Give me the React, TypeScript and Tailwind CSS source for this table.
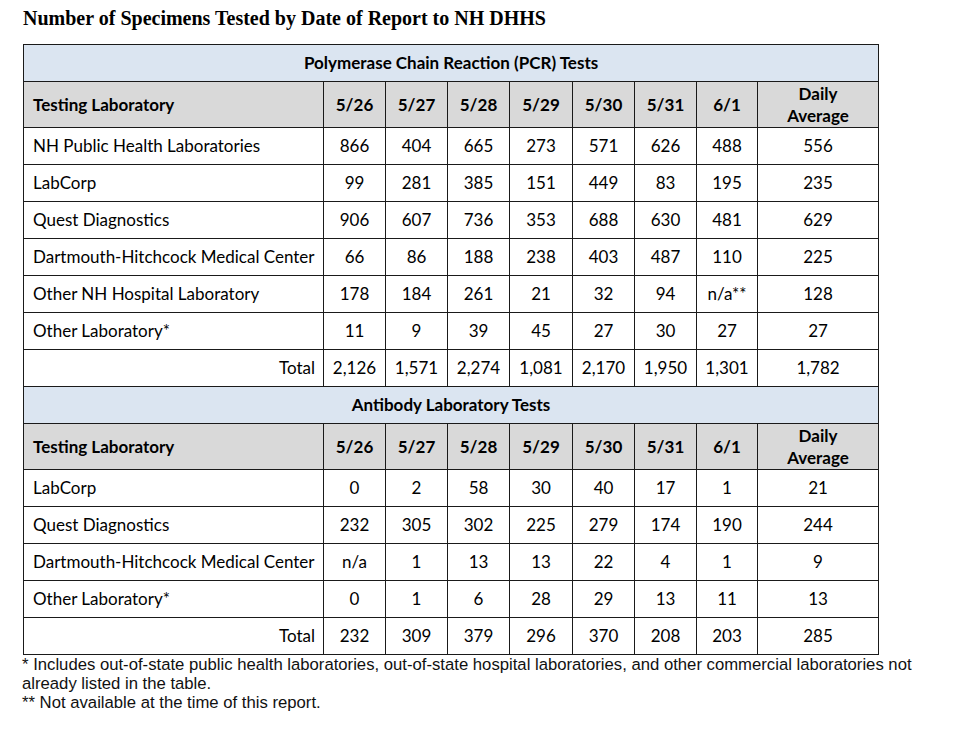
const dates = ["5/26", "5/27", "5/28", "5/29", "5/30", "5/31", "6/1"];

type Row = { lab: string; vals: string[]; avg: string };

const pcr: Row[] = [
  { lab: "NH Public Health Laboratories", vals: ["866", "404", "665", "273", "571", "626", "488"], avg: "556" },
  { lab: "LabCorp", vals: ["99", "281", "385", "151", "449", "83", "195"], avg: "235" },
  { lab: "Quest Diagnostics", vals: ["906", "607", "736", "353", "688", "630", "481"], avg: "629" },
  { lab: "Dartmouth-Hitchcock Medical Center", vals: ["66", "86", "188", "238", "403", "487", "110"], avg: "225" },
  { lab: "Other NH Hospital Laboratory", vals: ["178", "184", "261", "21", "32", "94", "n/a**"], avg: "128" },
  { lab: "Other Laboratory*", vals: ["11", "9", "39", "45", "27", "30", "27"], avg: "27" },
];
const pcrTotal = ["2,126", "1,571", "2,274", "1,081", "2,170", "1,950", "1,301"];

const antibody: Row[] = [
  { lab: "LabCorp", vals: ["0", "2", "58", "30", "40", "17", "1"], avg: "21" },
  { lab: "Quest Diagnostics", vals: ["232", "305", "302", "225", "279", "174", "190"], avg: "244" },
  { lab: "Dartmouth-Hitchcock Medical Center", vals: ["n/a", "1", "13", "13", "22", "4", "1"], avg: "9" },
  { lab: "Other Laboratory*", vals: ["0", "1", "6", "28", "29", "13", "11"], avg: "13" },
];
const abTotal = ["232", "309", "379", "296", "370", "208", "203"];

const cell = "border border-[#1a1a1a] text-center";

function Section({ title, rows, total, avg }: { title: string; rows: Row[]; total: string[]; avg: string }) {
  return (
    <>
      <tr className="h-[37px] bg-[#dbe5f1]">
        <td colSpan={9} className="border border-[#1a1a1a] text-center font-bold">
          {title}
        </td>
      </tr>
      <tr className="h-[46px] bg-[#d9d9d9] font-bold">
        <td className="border border-[#1a1a1a] pl-[9px]">Testing Laboratory</td>
        {dates.map((d) => (
          <td key={d} className={cell}>
            {d}
          </td>
        ))}
        <td className="border border-[#1a1a1a] text-center leading-[22px]">
          Daily
          <br />
          Average
        </td>
      </tr>
      {rows.map((r) => (
        <tr key={r.lab} className="h-[37px]">
          <td className="border border-[#1a1a1a] pl-[9px]">{r.lab}</td>
          {r.vals.map((v, i) => (
            <td key={i} className={cell}>
              {v}
            </td>
          ))}
          <td className={cell}>{r.avg}</td>
        </tr>
      ))}
      <tr className="h-[37px]">
        <td className="border border-[#1a1a1a] text-right pr-[8px]">Total</td>
        {total.map((v, i) => (
          <td key={i} className={cell}>
            {v}
          </td>
        ))}
        <td className={cell}>{avg}</td>
      </tr>
    </>
  );
}

export default function App() {
  return (
    <div className="w-[960px] h-[731px] bg-white text-black overflow-hidden">
      <h1 className="pl-[23px] pt-[6px] font-['Liberation_Serif',serif] font-bold text-[20px] leading-[24px]">
        Number of Specimens Tested by Date of Report to NH DHHS
      </h1>
      <table className="ml-[23px] mt-[14px] w-[855px] table-fixed border-collapse font-['Lato',sans-serif] text-[17px] text-black">
        <colgroup>
          <col className="w-[300px]" />
          <col className="w-[62px]" />
          <col className="w-[62px]" />
          <col className="w-[62px]" />
          <col className="w-[63px]" />
          <col className="w-[62px]" />
          <col className="w-[62px]" />
          <col className="w-[61px]" />
          <col className="w-[121px]" />
        </colgroup>
        <tbody>
          <Section title="Polymerase Chain Reaction (PCR) Tests" rows={pcr} total={pcrTotal} avg="1,782" />
          <Section title="Antibody Laboratory Tests" rows={antibody} total={abTotal} avg="285" />
        </tbody>
      </table>
      <div className="w-[935px] pl-[22px] font-['Liberation_Sans',sans-serif] text-[16.7px] leading-[19px] text-[#111]">
        <p>
          * Includes out-of-state public health laboratories, out-of-state hospital laboratories, and other commercial laboratories not
          already listed in the table.
        </p>
        <p>** Not available at the time of this report.</p>
      </div>
    </div>
  );
}
